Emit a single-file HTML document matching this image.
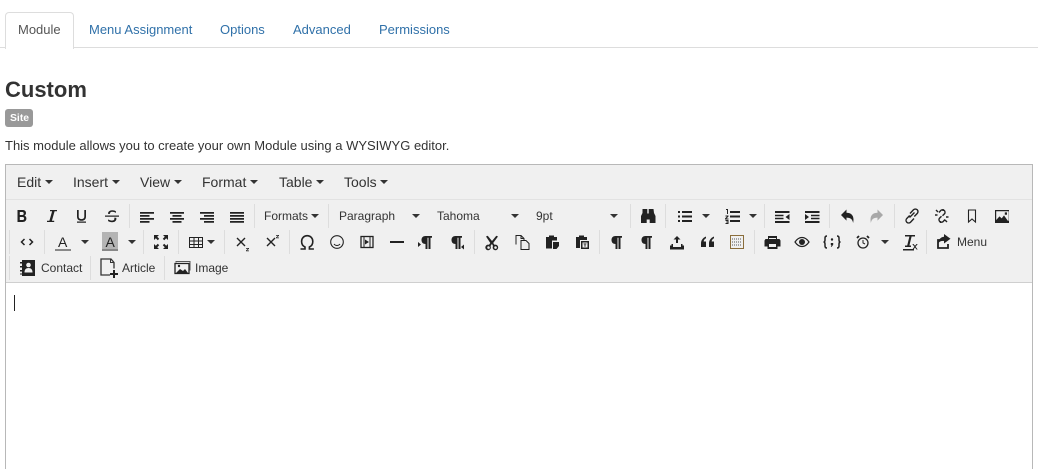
<!DOCTYPE html>
<html>
<head>
<meta charset="utf-8">
<style>
html,body{margin:0;padding:0;background:#fff;width:1038px;height:469px;overflow:hidden}
body{position:relative;font-family:"Liberation Sans",Arial,sans-serif;color:#333}
.t{position:absolute;white-space:nowrap}
.b{position:absolute}
svg text{font-family:"Liberation Sans",Arial,sans-serif}
</style>
</head>
<body>
<div class="b" style="left:0;top:47px;width:1038px;height:1px;background:#ddd"></div>
<div class="b" style="left:5px;top:12px;width:67px;height:36px;border:1px solid #ddd;border-bottom:0;border-radius:4px 4px 0 0;background:#fff"></div>
<div class="t" style="left:18px;top:22px;font-size:13px;line-height:15px;color:#555">Module</div>
<div class="t" style="left:89px;top:22px;font-size:13px;line-height:15px;color:#3071a9">Menu Assignment</div>
<div class="t" style="left:220px;top:22px;font-size:13px;line-height:15px;color:#3071a9">Options</div>
<div class="t" style="left:293px;top:22px;font-size:13px;line-height:15px;color:#3071a9">Advanced</div>
<div class="t" style="left:379px;top:22px;font-size:13px;line-height:15px;color:#3071a9">Permissions</div>
<div class="t" style="left:5px;top:77px;font-size:22px;line-height:26px;font-weight:bold;color:#333">Custom</div>
<div class="b" style="left:5px;top:109px;width:28px;height:18px;background:#999;border-radius:3px"></div>
<div class="t" style="left:10px;top:112px;font-size:10.4px;line-height:13px;font-weight:bold;color:#fff">Site</div>
<div class="t" style="left:5px;top:138px;font-size:13px;line-height:15px;color:#333">This module allows you to create your own Module using a WYSIWYG editor.</div>

<svg class="b" style="left:0;top:0" width="1038" height="469" viewBox="0 0 1038 469">
<rect x="5.5" y="164.5" width="1027" height="320" fill="#fff" stroke="#b8b8b8"/>
<rect x="6" y="165" width="1026" height="117" fill="#f0f0f0"/>
<rect x="6" y="199" width="1026" height="1" fill="#e2e2e2"/>
<rect x="6" y="282" width="1026" height="1" fill="#cfcfcf"/>
<rect x="14" y="295" width="1" height="16" fill="#222"/>

<g font-size="14" fill="#333">
<text x="17" y="187">Edit</text><text x="73" y="187">Insert</text><text x="140" y="187">View</text><text x="202" y="187">Format</text><text x="279" y="187">Table</text><text x="344" y="187">Tools</text>
</g>
<g fill="#333">
<path d="M45 180h8l-4 4zM112 180h8l-4 4zM174 180h8l-4 4zM250 180h8l-4 4zM316 180h8l-4 4zM380 180h8l-4 4z"/>
<path d="M311 214h8l-4 4zM412 214h8l-4 4zM511 214h8l-4 4zM610 214h8l-4 4zM702 214h8l-4 4zM749 214h8l-4 4zM81 240h8l-4 4zM128 240h8l-4 4zM207 240h8l-4 4zM881 240h8l-4 4z"/>
</g>
<g fill="#ddd">
<path d="M129 204h1v24h-1zM254 204h1v24h-1zM328 204h1v24h-1zM630 204h1v24h-1zM665 204h1v24h-1zM764 204h1v24h-1zM829 204h1v24h-1zM894 204h1v24h-1z"/>
<path d="M9 230h1v24h-1zM44 230h1v24h-1zM143 230h1v24h-1zM178 230h1v24h-1zM224 230h1v24h-1zM289 230h1v24h-1zM474 230h1v24h-1zM599 230h1v24h-1zM754 230h1v24h-1zM926 230h1v24h-1z"/>
<path d="M9 256h1v24h-1zM90 256h1v24h-1zM164 256h1v24h-1z"/>
</g>
<g font-size="12" fill="#333">
<text x="264" y="220">Formats</text><text x="339" y="220">Paragraph</text><text x="437" y="220">Tahoma</text><text x="536" y="220">9pt</text>
<text x="957" y="246">Menu</text>
<text x="41" y="272">Contact</text><text x="122" y="272">Article</text><text x="195" y="272">Image</text>
</g>

<!-- row 1 -->
<g fill="#222" stroke="none">
<path d="M17.500 210h5c2.400 0 3.500 1.300 3.500 3 0 1.300-.6 2.200-1.700 2.600 1.300.4 2.100 1.400 2.100 2.900 0 2.100-1.500 3.500-3.800 3.500h-5.100zM19.800 212v3h2.400c1 0 1.500-.6 1.500-1.500s-.5-1.500-1.500-1.500zM19.800 217v3h2.700c1.100 0 1.600-.6 1.600-1.500s-.5-1.500-1.600-1.500z" fill-rule="evenodd"/>
<path d="M50 210h7v1.200h-2.400l-2.700 9.600h2.300V222H47v-1.200h2.400l2.700-9.600H50z"/>
<path d="M77 210h1.700v6.500c0 1.700 1.100 2.600 2.800 2.600s2.800-.9 2.800-2.600V210H86v6.500c0 2.800-1.700 4.300-4.500 4.300s-4.500-1.500-4.500-4.300zM77 221.500h9v1.200h-9z"/>
<path d="M105 215.500h14v1.300h-14zM108 213.800c0-2 1.700-3.500 4.200-3.500 1.600 0 2.900.4 3.800 1.100l-.3 1.600c-1-.8-2.200-1.200-3.500-1.200-1.400 0-2.200.7-2.200 1.700 0 .1 0 .2.100.4h-2c-.1-.1-.1-.1-.1-.1zM116.200 217.800c.1.300.2.600.2.900 0 2.100-1.800 3.500-4.300 3.500-1.600 0-3.100-.5-4.100-1.200l.3-1.600c1.100.8 2.400 1.200 3.700 1.200 1.500 0 2.400-.7 2.400-1.800 0-.4-.1-.7-.3-1z"/>
<path d="M140 212h14v1.800h-14zM140 215h9.500v1.800H140zM140 218h14v1.800h-14zM140 221h9.500v1.800H140z"/>
<path d="M170 212h14v1.800h-14zM172.500 215h9v1.800h-9zM170 218h14v1.800h-14zM172.500 221h9v1.800h-9z"/>
<path d="M200 212h14v1.800h-14zM204 215h10v1.800h-10zM200 218h14v1.800h-14zM204 221h10v1.800h-10z"/>
<path d="M230 212h14v1.800h-14zM230 215h14v1.800h-14zM230 218h14v1.800h-14zM230 221h14v1.800h-14z"/>
<path d="M642.500 209h4.800v4.500h1.400V209h4.800l.5 4 1.500 3v7h-5.800v-3.500h-3V223H641v-7l1.500-3z"/>
<path d="M678 211h2v2h-2zM682 211h10v2h-10zM678 215.500h2v2h-2zM682 215.500h10v2h-10zM678 220h2v2h-2zM682 220h10v2h-10z"/>
<path d="M726 209h2v5h-1v-4h-1zM730 211h10v2h-10zM730 215.500h10v2h-10zM730 220h10v2h-10zM725.500 215.500h3v1l-2 2h2v1h-3.500v-1l2-2h-1.500zM725.500 220h3v4h-3v-1h2v-.6h-1.500v-.8h1.500v-.6h-2z"/>
<path d="M775 211h14.500v2H775zM775 214.800h8.500v1.500H775zM775 217.800h8.500v1.500H775zM775 221h14.500v2H775zM789.500 214v6l-4-3z"/>
<path d="M805 211h14.500v2H805zM811 214.800h8.500v1.500H811zM811 217.800h8.500v1.500H811zM805 221h14.500v2H805zM805 214v6l4-3z"/>
<path d="M841 215l5.500-5.500v3.300c4 0 7 2 7 7 0 1.200-.2 2.200-.4 3.200-.5-3.500-2.500-5.400-6.600-5.400v3z"/>
<path fill="#a8a8a8" d="M883 215l-5.500-5.500v3.300c-4 0-7 2-7 7 0 1.200.2 2.200.4 3.200.5-3.500 2.500-5.400 6.600-5.400v3z"/>
<path d="M995 210h14v13h-14zM996.200 211.200v8.800l3.300-3.600 2.200 2 2.300-3 3.800 5.400h.9v-9.600zM1004.800 212.400h2.200v2.300h-2.200z" fill-rule="evenodd"/>
</g>
<g fill="none" stroke="#222" stroke-width="1.400">
<path d="M910 213.500l3.500-3.700a2.600 2.600 0 0 1 3.700 3.700l-2.900 3M914 218.500l-3.500 3.700a2.600 2.600 0 0 1-3.700-3.700l2.900-3M909.500 217.500l5-5"/>
<path d="M939 212.500l2-2.200a2.500 2.500 0 0 1 3.500 3.500l-2 2M945 219.500l-2 2.200a2.500 2.500 0 0 1-3.500-3.500l2-2M936 210l2 2M947 222l-2-2M935 215h2.500M946 217h2.500M943 209v2M940.500 223v-2"/>
<path d="M968.500 210h7v12l-3.500-3-3.500 3z" stroke-width="1.100"/>
</g>

<!-- row 2 -->
<g fill="none" stroke="#222" stroke-width="1.500">
<path d="M24.500 239l-3 3 3 3M29.500 239l3 3-3 3"/>
<circle cx="337" cy="242" r="6.300" stroke-width="1.100"/>
<path d="M334 244c1.500 2 4.500 2 6 0" stroke-width="1"/>
<path d="M300.500 249h4.500v-2c-2.200-1-3.400-3-3.400-5.500 0-3.500 2.400-5.800 5.600-5.800s5.600 2.300 5.600 5.800c0 2.500-1.200 4.500-3.400 5.500v2h4.500" stroke-width="1.600"/>
<rect x="361" y="236.500" width="12" height="11" stroke-width="1.300"/>
<path d="M364 236.500v11M370 236.500v11" stroke-width="1"/>
<path d="M516 244.500v-9h5l3 3v2M524 238.500h-3v-3M521 240.500h5l3 3v6h-8z" stroke-width="1"/>
<rect x="189.500" y="237.500" width="13" height="10" stroke-width="1"/>
<path d="M189 241h14M189 244.500h14M194 237v11M198.500 237v11" stroke-width="1"/>
<rect x="730.500" y="235.500" width="13" height="13" stroke="#8a6d3b" stroke-width="1"/>
<path d="M732 239h10M732 242h10M732 245h10" stroke="#555" stroke-width="1" stroke-dasharray="1 1"/>
<path d="M795 242c2-3 4.500-4.500 7-4.500s5 1.500 7 4.500c-2 3-4.500 4.500-7 4.500s-5-1.500-7-4.500z" stroke-width="1.200"/>
<circle cx="863" cy="243" r="5" stroke-width="1.300"/>
<path d="M863 240v3l2 1" stroke-width="1"/>
<path d="M857 238l2-2M869 238l-2-2" stroke-width="1.800"/>
<path d="M827 236c-1.500 0-2 .6-2 2v2c0 1-.5 2-1.500 2 1 0 1.500 1 1.500 2v2c0 1.400.5 2 2 2M837 236c1.500 0 2 .6 2 2v2c0 1 .5 2 1.500 2-1 0-1.500 1-1.500 2v2c0 1.400-.5 2-2 2" stroke-width="1.500"/>
<path d="M237 238l8 8M245 238l-8 8M267 238l8 8M275 238l-8 8" stroke-width="1.400"/>
<path d="M945 240h-7v8h10v-4" stroke-width="1.800"/>
</g>
<g fill="#222">
<text x="58" y="247" font-size="14" fill="#222">A</text>
<rect x="55" y="249" width="16" height="2" fill="#888"/>
<rect x="102" y="232" width="16" height="19" fill="#b4b4b4"/>
<text x="105.500" y="247" font-size="14" fill="#222">A</text>
<rect x="102" y="249" width="16" height="2" fill="#888"/>
<path d="M154 235h5l-1.800 1.800 2 2-1.400 1.400-2-2L154 240zM168 235h-5l1.800 1.800-2 2 1.400 1.400 2-2L168 240zM154 249h5l-1.800-1.800 2-2-1.400-1.400-2 2L154 244zM168 249h-5l1.800-1.800-2-2 1.400-1.400 2 2L168 244z"/>
<path d="M246 248h3v.8l-2 1.700h2v.8h-3v-.8l2-1.700h-2zM276 235h3v.8l-2 1.700h2v.8h-3v-.8l2-1.700h-2z"/>
<path d="M365 239.500l4 2.500-4 2.500z"/>
<path d="M390 241h14v2h-14z"/>
<path d="M421 236h11v1.800h-1.500V249h-2v-11.200h-1V249h-2v-5c-2.500 0-4-1.500-4-4s1.500-4 4-4zM418 242l3 2.500-3 2.500z"/>
<path d="M451 236h11v1.800h-1.500V249h-2v-11.200h-1V249h-2v-5c-2.500 0-4-1.500-4-4s1.500-4 4-4zM464 244.500l-3 2.500 3 2.500z"/>
<path d="M611 236h11v1.800h-1.500V249h-2v-11.200h-1V249h-2v-5c-2.500 0-4-1.500-4-4s1.500-4 4-4zM641 236h11v1.800h-1.500V249h-2v-11.200h-1V249h-2v-5c-2.500 0-4-1.500-4-4s1.500-4 4-4z"/>
<path d="M486 236.500l1.700-.8 4.300 5.300 4.300-5.300 1.700.8-4.800 6.500 1.300 1.800a2.800 2.800 0 1 1-1.500 1.200L492 244l-.5.500-1 1.500a2.800 2.800 0 1 1-1.500-1.200l1.300-1.800zM488.500 246.300a1.300 1.300 0 1 0 .1 2.600 1.300 1.300 0 0 0-.1-2.600zM495.500 246.300a1.300 1.300 0 1 0 .1 2.600 1.300 1.300 0 0 0-.1-2.600z" fill-rule="evenodd"/>
<path d="M546 237h3v-1.500h5V237h3v3.500h-5v8h-6zM553 242h6v4l-2.500 3H553z"/>
<path d="M576 237h3v-1.500h5V237h3v3h-7v8h-4zM581 241h8v8h-8z"/>
<rect x="582.500" y="242.500" width="5" height="5" fill="#f0f0f0"/><path d="M583.500 243.500h3v.8h-1v2.500h-1v-2.500h-1z"/>
<path d="M670 247h3v-3h-1.500v1.500H670zM684 247h-3v-3h1.500v1.500H684zM670 247h14v2.500h-14zM677 236l3.500 3.500h-2.500v3.500h-2v-3.500h-2.500z"/>
<path d="M701 247v-3.500c0-3 1.500-5.500 5-7v1.800c-1.500.8-2.300 2-2.300 3.200h2.300v5.500zM709 247v-3.500c0-3 1.500-5.500 5-7v1.800c-1.500.8-2.300 2-2.300 3.200h2.300v5.500z"/>
<path d="M768 236h9v3h2.500l1 1.500v6h-3v2.500h-10v-2.500h-3v-6l1-1.500h2.500zM769 238v1h7v-1zM769 244v3h7v-3z" fill-rule="evenodd"/>
<circle cx="802" cy="242" r="3"/>
<circle cx="832" cy="239.500" r="1.200"/><path d="M830.800 243h2.400v1.800l-1.500 2h-.9l.7-1.800h-.7z"/>
<path d="M905 235h10v1.500h-3.400l-2.200 9h1.600v1.500h-6v-1.500h2.200l2.200-9H905zM903 249h11v1.500h-11zM913.500 244l1.500 1.800 1.500-1.800h1.200l-2.100 2.700 2.100 2.800h-1.200l-1.500-2-1.500 2h-1.200l2.100-2.800-2.100-2.700z"/>
<path d="M944 234l6.500 4.800-6.500 4.700v-2.700c-3 0-5 1-6 3 .3-4 2.500-6.800 6-7.100z"/>
</g>

<!-- row 3 -->
<g fill="#222">
<path d="M22 260h13v16H22zM20 262h2v1.500h-2zM20 266h2v1.500h-2zM20 270h2v1.500h-2zM20 273.500h2v1h-2z"/>
<circle cx="28.500" cy="265" r="2.300" fill="#f0f0f0"/>
<path d="M24.500 272.500c0-3 1.500-4.500 4-4.500s4 1.500 4 4.500z" fill="#f0f0f0"/>
</g>
<g fill="none" stroke="#333" stroke-width="1.300">
<path d="M110 275h-9v-16h10l3 3.500v6"/>
<path d="M110.500 259v3.500h3.500" stroke-width="1"/>
</g>
<path d="M113 270h2v3h3v2h-3v3h-2v-3h-3v-2h3z" fill="#222"/>
<g>
<path d="M175 263.500h14v10h-14z" fill="none" stroke="#222" stroke-width="1.300"/>
<path d="M176 262.500v-1h14v9" fill="none" stroke="#555" stroke-width="1"/>
<path d="M176 273l4-4 3 2 2-2 3 4z" fill="#222"/>
<circle cx="179" cy="266" r="1.200" fill="#222"/>
</g>
</svg>
</body>
</html>
